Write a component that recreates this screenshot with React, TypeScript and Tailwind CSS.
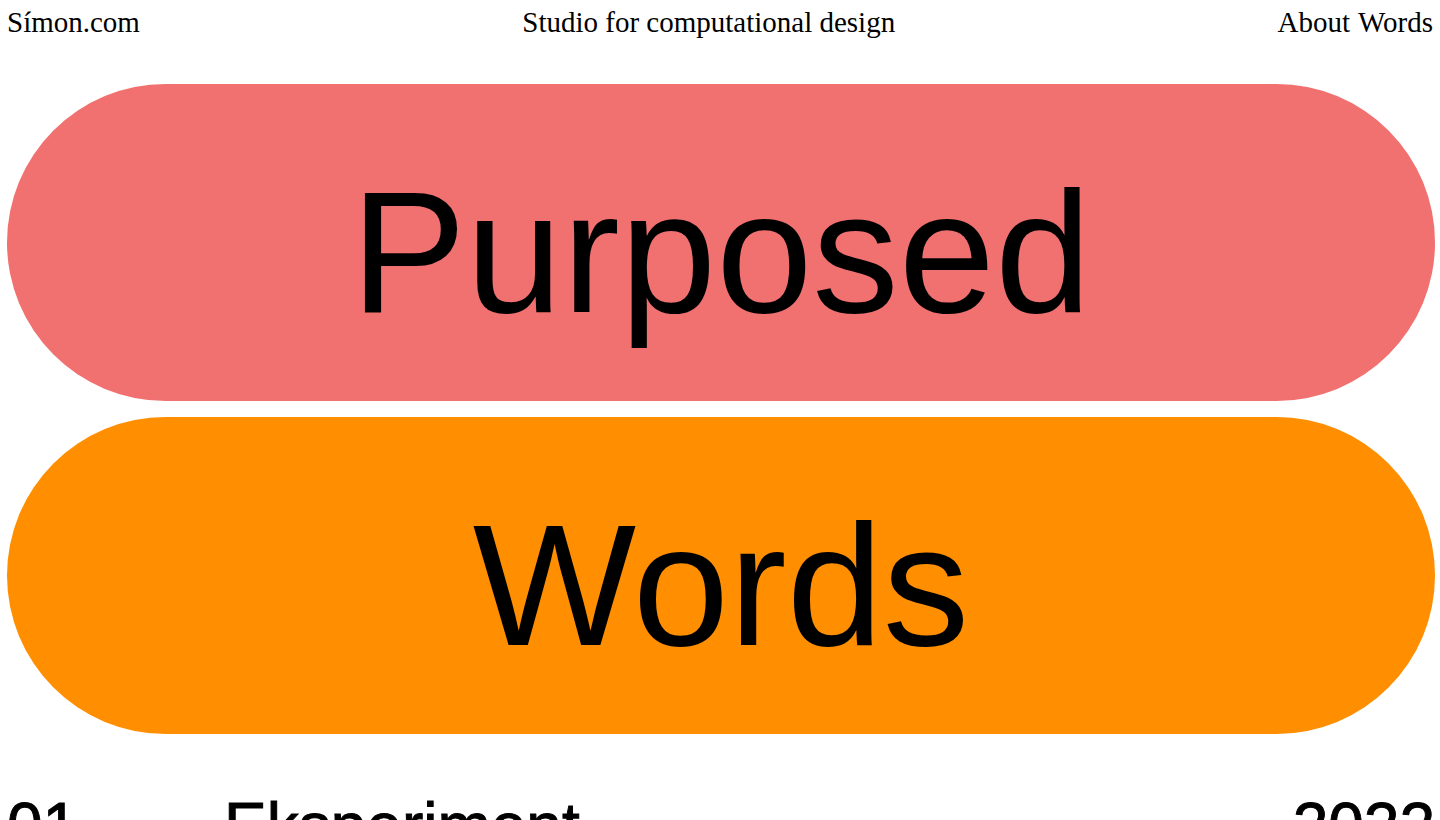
const pill =
  "flex h-[317px] items-center justify-center rounded-full pt-5 text-[173px] leading-none";

export default function App() {
  return (
    <div className="min-h-screen bg-white pr-[5px] pl-[7px] font-['Liberation_Sans',Arial,sans-serif] text-black">
      <header className="flex items-center justify-between pt-1 pr-0.5 font-['Liberation_Serif',serif] text-[29px] leading-9">
        <a href="#home">Símon.com</a>
        <p>Studio for computational design</p>
        <nav className="flex gap-2">
          <a href="#about">About</a>
          <a href="#words">Words</a>
        </nav>
      </header>
      <main className="pt-11">
        <h1 className="flex flex-col gap-4 font-normal">
          <a href="#purposed" className={`${pill} bg-[#f17171]`}>Purposed</a>
          <a href="#words" className={`${pill} bg-[#ff8f00]`}>Words</a>
        </h1>
        <a
          href="#eksperiment"
          className="mt-13 flex text-[64px] leading-[80px] [-webkit-text-stroke:1px_black]"
        >
          <span className="w-[217px]">01</span>
          <span className="grow">Eksperiment</span>
          <span>2022</span>
        </a>
      </main>
    </div>
  );
}
